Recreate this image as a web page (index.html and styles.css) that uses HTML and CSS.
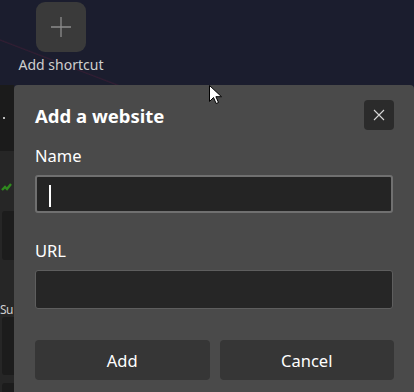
FILE: index.html
```html
<!DOCTYPE html>
<html lang="en">
<head>
  <meta charset="UTF-8" />
  <meta name="viewport" content="width=device-width, initial-scale=1.0"/>
  <title>New tab - Add a website</title>
  <link rel="stylesheet" href="styles.css">
</head>
<body>
  <header class="top">
    <div class="shortcut">
      <div class="tile">
        <svg width="22" height="22" viewBox="0 0 22 22"><path d="M11 1v20M1 11h20" stroke="#8c8c8c" stroke-width="1.3" fill="none"/></svg>
      </div>
      <span class="shortcut-label">Add shortcut</span>
    </div>
  </header>

  <div class="lower">
    <aside class="strip">
      <div class="strip-head"><span class="dot"></span></div>
      <div class="strip-icon">
        <svg width="12" height="10" viewBox="0 0 12 10"><path d="M1 8l3-3 2 2 4-5" stroke="#2f8a1e" stroke-width="2.4" fill="none"/></svg>
      </div>
      <div class="strip-card"></div>
      <div class="strip-text">Su</div>
      <div class="strip-card tall"></div>
      <div class="strip-card"></div>
    </aside>

    <section class="dialog">
      <div class="dialog-head">
        <h1>Add a website</h1>
        <button class="close" aria-label="Close">
          <svg width="12" height="12" viewBox="0 0 12 12"><path d="M1 1l10 10M11 1L1 11" stroke="#d8d8d8" stroke-width="1.1" fill="none"/></svg>
        </button>
      </div>

      <label class="field-label" for="site-name">Name</label>
      <div class="input focused"><span class="caret"></span></div>

      <label class="field-label url" for="site-url">URL</label>
      <div class="input"></div>

      <div class="actions">
        <button class="btn">Add</button>
        <button class="btn">Cancel</button>
      </div>
    </section>
  </div>

  <svg class="pointer" width="13" height="20" viewBox="0 0 13 20">
    <path d="M0.5 0.5v16l4-4 2.6 6 2.4-1-2.6-5.8h5.6z" fill="#fff" stroke="#000" stroke-width="1"/>
  </svg>
</body>
</html>
```

FILE: styles.css
```css
body {
  margin: 0;
  width: 414px;
  height: 392px;
  overflow: hidden;
  position: relative;
  background: #1b1d2e;
  font-family: "Noto Sans", "Open Sans", sans-serif;
  color: #ffffff;
}

.top {
  height: 85px;
  padding-left: 18px;
  box-sizing: border-box;
  background:
    linear-gradient(21deg, transparent 18%, rgba(95, 30, 60, 0.35) 18.4%, transparent 19%),
    #1b1d2e;
}

.shortcut {
  width: 86px;
  padding-top: 2px;
  display: flex;
  flex-direction: column;
  align-items: center;
}

.tile {
  width: 50px;
  height: 50px;
  border-radius: 9px;
  background: #3a3a3a;
  display: flex;
  align-items: center;
  justify-content: center;
}

.shortcut-label {
  margin-top: 3px;
  font-size: 14px;
  color: #cfcfcf;
  white-space: nowrap;
}

.lower {
  display: flex;
  height: 307px;
}

/* page content peeking out from behind the dialog */
.strip {
  width: 14px;
  background: #262626;
  display: flex;
  flex-direction: column;
  overflow: hidden;
}

.strip > * {
  flex-shrink: 0;
}

.strip-head {
  height: 66px;
  background: #1b1b1b;
  position: relative;
}

.dot {
  position: absolute;
  left: 3px;
  top: 32px;
  width: 2px;
  height: 2px;
  background: #bbb;
}

.strip-icon {
  height: 20px;
  margin-top: 24px;
  padding-left: 1px;
}

.strip-card {
  margin: 16px 0 0 2px;
  height: 49px;
  background: #1c1c1c;
  border-radius: 3px 0 0 3px;
}

.strip-card.tall {
  margin-top: 0;
  height: 58px;
}

.strip-card:last-child {
  margin-top: 8px;
}

.strip-text {
  font-size: 12px;
  line-height: 14px;
  color: #cfcfcf;
  height: 14px;
  margin-top: 43px;
  white-space: nowrap;
  letter-spacing: -0.5px;
}

.dialog {
  flex: 1;
  background: #4a4a4a;
  border-radius: 4px 4px 0 0;
  padding: 15px 20px 0 21px;
}

.dialog-head {
  display: flex;
  justify-content: space-between;
  align-items: center;
  height: 30px;
}

h1 {
  margin: 0;
  font-size: 18.5px;
  font-weight: 700;
}

.close {
  width: 30px;
  height: 30px;
  border: none;
  border-radius: 4px;
  background: #2b2b2b;
  display: flex;
  align-items: center;
  justify-content: center;
  padding: 0;
}

.field-label {
  display: block;
  margin-top: 14px;
  font-size: 16.5px;
  line-height: 24px;
}

.field-label.url {
  margin-top: 26px;
}

.input {
  margin-top: 7px;
  height: 39px;
  box-sizing: border-box;
  border: 1px solid #5e5e5e;
  border-radius: 3px;
  background: #262626;
  width: 358px;
  position: relative;
}

.input.focused {
  height: 38px;
  border: 2px solid #707070;
  background: #242424;
}

.caret {
  position: absolute;
  left: 12px;
  top: 8px;
  width: 2px;
  height: 22px;
  background: #fff;
}

.actions {
  display: flex;
  gap: 10px;
  margin-top: 31px;
  width: 359px;
}

.btn {
  flex: 1;
  height: 40px;
  border: none;
  border-radius: 4px;
  background: #363636;
  color: #ffffff;
  font-family: inherit;
  font-size: 16.5px;
}

.pointer {
  position: absolute;
  left: 209px;
  top: 85px;
}
```
